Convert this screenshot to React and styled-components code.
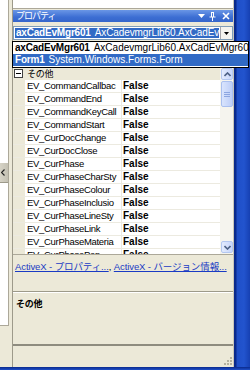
import styled, { createGlobalStyle } from 'styled-components'

const GlobalStyle = createGlobalStyle`
  html, body { margin: 0; padding: 0; background: #ECE9D8; }
  * { box-sizing: border-box; }
`

const UI_FONT = `"Liberation Sans", "Noto Sans CJK JP", sans-serif`

const Screen = styled.div`
  position: relative;
  width: 250px;
  height: 370px;
  display: flex;
  flex-direction: column;
  background: #ECE9D8;
  overflow: hidden;
  font-family: ${UI_FONT};
  font-size: 10px;
  color: #000;
`

const Body = styled.div`
  flex: 1;
  display: flex;
  min-height: 0;
`

const LeftStrip = styled.div`
  width: 12px;
  display: flex;
  flex-direction: column;
`

const BackPane = styled.div`
  width: 9px;
  height: 326px;
  background: #fff;
  border-right: 1px solid #ACA899;
  border-bottom: 1px solid #ACA899;
  display: flex;
  flex-direction: column;
`

const BackButton = styled.div`
  margin-top: 163px;
  width: 8px;
  height: 20px;
  background: linear-gradient(to right, #D6D3C6, #C4C1B3);
  border-bottom: 1px solid #9D9A8A;
  display: flex;
  align-items: center;
  padding-left: 1px;
`

const Main = styled.div`
  width: 222px;
  display: flex;
  flex-direction: column;
  border-left: 1px solid #9D9A8A;
  border-right: 1px solid #C9C6B8;
`

const RightFrame = styled.div`
  width: 16px;
  background: linear-gradient(to right, #0A2A8C 0, #0A2A8C 2px, #1F4FC8 3px, #2254CE 10px, #1640B2 16px);
`

const BottomFrame = styled.div`
  height: 3px;
  background: linear-gradient(to bottom, #0A2A8C, #1F4FC8);
`

const TopPane = styled.div`
  height: 9px;
  background: #fff;
  border-bottom: 1px solid #ACA899;
`

const TitleBar = styled.div`
  margin-top: 1px;
  height: 12px;
  display: flex;
  align-items: center;
  padding: 0 3px 0 3px;
  background: linear-gradient(to bottom, #6A96E6, #3C6ED3 60%, #3566CB);
  color: #fff;
`

const TitleText = styled.span`
  flex: 1;
  font-size: 9px;
  letter-spacing: -1px;
  line-height: 12px;
`

const TitleButtons = styled.div`
  display: flex;
  align-items: center;
  gap: 4px;
`

const ComboRow = styled.div`
  margin-top: 4px;
  height: 14px;
  display: flex;
  border: 1px solid #7F9DB9;
  background: #fff;
`

const ComboValue = styled.div`
  flex: 1;
  margin: 1px;
  padding-left: 1px;
  background: #316AC5;
  color: #fff;
  white-space: nowrap;
  overflow: hidden;
  line-height: 10px;
  letter-spacing: -0.1px;
`

const ComboButton = styled.div`
  width: 12px;
  display: flex;
  align-items: center;
  justify-content: center;
  background: #F4F3EE;
  border-left: 1px solid #A7A6AA;
`

const Bold = styled.b`
  font-weight: bold;
  letter-spacing: -0.2px;
  margin-right: 4px;
`

const Toolbar = styled.div`
  height: 27px;
`

const DropList = styled.div`
  position: absolute;
  top: 41px;
  left: 12px;
  width: 237px;
  height: 27px;
  background: #fff;
  border: 1px solid #000;
  z-index: 2;
`

const ListItem = styled.div`
  height: 12px;
  padding-left: 2px;
  line-height: 12px;
  white-space: nowrap;
  overflow: hidden;
  background: ${p => (p.$selected ? '#316AC5' : '#fff')};
  color: ${p => (p.$selected ? '#fff' : '#000')};
`

const Grid = styled.div`
  height: 188px;
  display: flex;
  background: #fff;
  border-bottom: 1px solid #ACA899;
`

const Rows = styled.div`
  flex: 1;
  overflow: hidden;
  display: flex;
  flex-direction: column;
`

const CategoryRow = styled.div`
  flex: 0 0 12.7px;
  display: flex;
  align-items: center;
  background: #ECE9D8;
`

const Toggle = styled.div`
  width: 9px;
  height: 9px;
  margin: 0 4px 0 1px;
  border: 1px solid #404040;
  background: #fff;
  display: flex;
  align-items: center;
  justify-content: center;
  &::after {
    content: '';
    width: 5px;
    height: 1px;
    background: #000;
  }
`

const CategoryText = styled.span`
  font-size: 9px;
  letter-spacing: -0.3px;
`

const PropRow = styled.div`
  flex: 0 0 12.7px;
  display: flex;
  border-bottom: 1px solid #ECEAE0;
`

const Gutter = styled.div`
  width: 12px;
  background: #ECE9D8;
`

const PropName = styled.div`
  width: 97px;
  padding-left: 2px;
  border-right: 1px solid #ECEAE0;
  white-space: nowrap;
  overflow: hidden;
  font-size: 9.5px;
  line-height: 12px;
  letter-spacing: -0.3px;
`

const PropValue = styled.div`
  flex: 1;
  padding-left: 1px;
  font-weight: bold;
  line-height: 12px;
`

const ScrollBar = styled.div`
  width: 13px;
  display: flex;
  flex-direction: column;
  background: #F5F4EE;
  padding: 1px 0 1px 1px;
`

const ScrollButton = styled.div`
  height: 12px;
  border: 1px solid #B3C7F0;
  border-radius: 2px;
  background: linear-gradient(to right, #E3EBFD, #C6D5FA);
  display: flex;
  align-items: center;
  justify-content: center;
`

const Thumb = styled.div`
  margin-top: 1px;
  height: 26px;
  border: 1px solid #A9BFEF;
  border-radius: 2px;
  background: linear-gradient(to right, #D9E4FD, #BDCEF7);
  display: flex;
  align-items: center;
  justify-content: center;
`

const Track = styled.div`
  flex: 1;
`

const Commands = styled.div`
  height: 36px;
  padding: 4px 0 0 2px;
  white-space: nowrap;
  overflow: hidden;
  font-size: 9.5px;
  letter-spacing: -0.1px;
`

const CmdLink = styled.span`
  color: #1A3BC4;
  text-decoration: underline;
`

const Description = styled.div`
  height: 55px;
  border-top: 1px solid #9D9A8A;
  border-bottom: 2px solid #8E8C7F;
  box-shadow: inset 0 1px #fff;
  padding: 5px 0 0 3px;
`

const DescTitle = styled.div`
  font-weight: bold;
  font-size: 9px;
  letter-spacing: -0.3px;
`

const Footer = styled.div`
  flex: 1;
  display: flex;
  justify-content: flex-end;
  align-items: flex-end;
  padding: 0 1px 2px 0;
`

const props = [
  'EV_CommandCallbac',
  'EV_CommandEnd',
  'EV_CommandKeyCall',
  'EV_CommandStart',
  'EV_CurDocChange',
  'EV_CurDocClose',
  'EV_CurPhase',
  'EV_CurPhaseCharSty',
  'EV_CurPhaseColour',
  'EV_CurPhaseInclusio',
  'EV_CurPhaseLineSty',
  'EV_CurPhaseLink',
  'EV_CurPhaseMateria',
  'EV_CurPhasePen',
]

function Arrow({ up }) {
  return (
    <svg width="7" height="5" viewBox="0 0 7 5">
      <path d={up ? 'M0.5 4 L3.5 1 L6.5 4' : 'M0.5 1 L3.5 4 L6.5 1'} fill="none" stroke="#4D6185" strokeWidth="1.6" />
    </svg>
  )
}

function App() {
  return (
    <Screen>
      <GlobalStyle />
      <Body>
        <LeftStrip>
          <BackPane>
            <BackButton>
              <svg width="4" height="7" viewBox="0 0 4 7">
                <path d="M3.5 0.5 L0.5 3.5 L3.5 6.5" fill="none" stroke="#222" strokeWidth="1.2" />
              </svg>
            </BackButton>
          </BackPane>
        </LeftStrip>

        <Main>
          <TopPane />
          <TitleBar>
            <TitleText>プロパティ</TitleText>
            <TitleButtons>
              <svg width="7" height="4" viewBox="0 0 7 4">
                <path d="M0 0 H7 L3.5 4 Z" fill="#fff" />
              </svg>
              <svg width="7" height="9" viewBox="0 0 7 9">
                <path d="M2 0.5 H5 M2.5 0.5 V5 M4.5 0.5 V5 M0.5 5 H6.5 M3.5 5 V9" fill="none" stroke="#fff" strokeWidth="1" />
              </svg>
              <svg width="8" height="8" viewBox="0 0 8 8" style={{ marginLeft: 2 }}>
                <path d="M1 1 L7 7 M7 1 L1 7" stroke="#fff" strokeWidth="1.6" />
              </svg>
            </TitleButtons>
          </TitleBar>

          <ComboRow>
            <ComboValue>
              <Bold>axCadEvMgr601</Bold>AxCadevmgrLib60.AxCadEv
            </ComboValue>
            <ComboButton>
              <svg width="5" height="3" viewBox="0 0 5 3">
                <path d="M0 0 H5 L2.5 3 Z" fill="#000" />
              </svg>
            </ComboButton>
          </ComboRow>

          <Toolbar />

          <Grid>
            <Rows>
              <CategoryRow>
                <Toggle />
                <CategoryText>その他</CategoryText>
              </CategoryRow>
              {props.map(name => (
                <PropRow key={name}>
                  <Gutter />
                  <PropName>{name}</PropName>
                  <PropValue>False</PropValue>
                </PropRow>
              ))}
            </Rows>
            <ScrollBar>
              <ScrollButton><Arrow up /></ScrollButton>
              <Thumb>
                <svg width="6" height="7" viewBox="0 0 6 7">
                  <path d="M0 1.5 H6 M0 3.5 H6 M0 5.5 H6" stroke="#8CA6E0" strokeWidth="1" />
                </svg>
              </Thumb>
              <Track />
              <ScrollButton><Arrow /></ScrollButton>
            </ScrollBar>
          </Grid>

          <Commands>
            <CmdLink>ActiveX - プロパティ...</CmdLink>, <CmdLink>ActiveX - バージョン情報...</CmdLink>
          </Commands>

          <Description>
            <DescTitle>その他</DescTitle>
          </Description>

          <Footer>
            <svg width="9" height="12" viewBox="0 0 9 12">
              <g fill="#B5B29F">
                <rect x="7" y="4" width="2" height="2" />
                <rect x="7" y="7" width="2" height="2" />
                <rect x="4" y="7" width="2" height="2" />
                <rect x="7" y="10" width="2" height="2" />
                <rect x="4" y="10" width="2" height="2" />
                <rect x="1" y="10" width="2" height="2" />
              </g>
            </svg>
          </Footer>
        </Main>

        <RightFrame />
      </Body>
      <BottomFrame />

      <DropList>
        <ListItem>
          <Bold>axCadEvMgr601</Bold>AxCadevmgrLib60.AxCadEvMgr60
        </ListItem>
        <ListItem $selected>
          <Bold>Form1</Bold>System.Windows.Forms.Form
        </ListItem>
      </DropList>
    </Screen>
  )
}

export default App
